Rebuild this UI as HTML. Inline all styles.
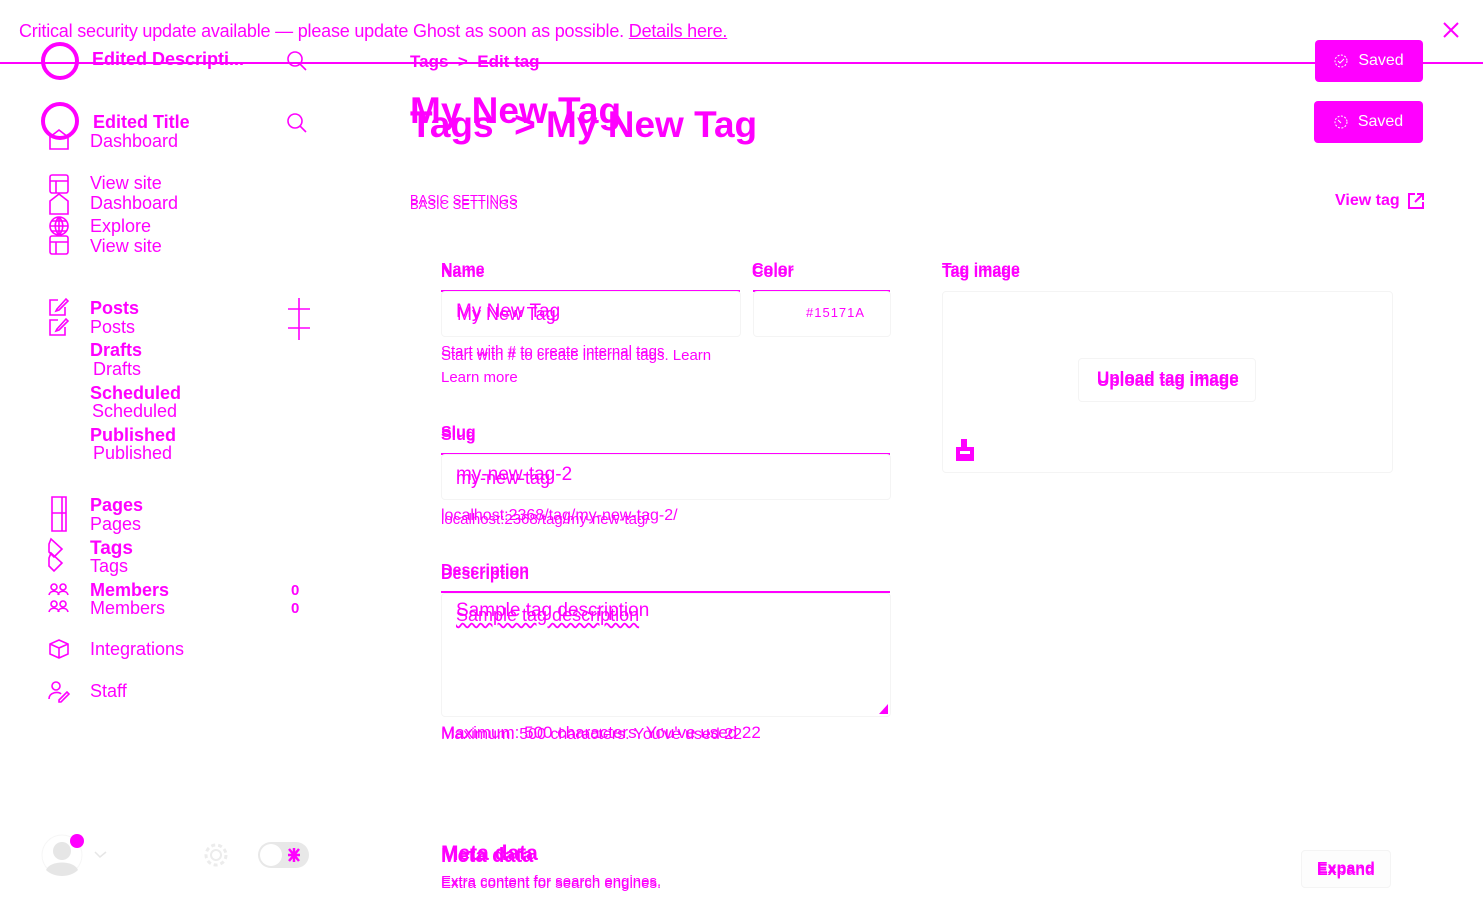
<!DOCTYPE html>
<html><head><meta charset="utf-8"><style>
*{margin:0;padding:0;box-sizing:border-box}
body{width:1483px;height:920px;background:#fff;position:relative;overflow:hidden;font-family:"Liberation Sans",sans-serif;color:#f0f}
.t{position:absolute;white-space:nowrap;line-height:1}
.b{font-weight:bold}
.ln{position:absolute;height:1.5px;background:#f0f}
.box{position:absolute;border:1px solid #f4f4f4;border-radius:4px}
svg{position:absolute;overflow:visible}
.btn{position:absolute;background:#f0f;border-radius:4px;color:#fff;font-size:16px;display:flex;align-items:center;justify-content:center;gap:10px}
</style></head><body>
<div class="t" style="left:19px;top:22px;font-size:18px;letter-spacing:-0.2px">Critical security update available — please update Ghost as soon as possible. <span style="text-decoration:underline">Details here.</span></div>
<svg style="left:1443px;top:22px" width="16" height="16"><path d="M1 1L15 15M15 1L1 15" stroke="#f0f" stroke-width="2"/></svg>
<div class="ln" style="left:0;top:62px;width:1483px"></div>

<!-- sidebar -->
<svg style="left:40px;top:41px" width="40" height="40"><circle cx="20" cy="20" r="17" fill="none" stroke="#f0f" stroke-width="4"/></svg>
<div class="t b" style="left:92px;top:50px;font-size:18px">Edited Descripti...</div>
<svg style="left:285px;top:49px" width="24" height="24"><circle cx="10" cy="10" r="7" fill="none" stroke="#f0f" stroke-width="1.6"/><path d="M15 15L21 21" stroke="#f0f" stroke-width="1.6"/></svg>
<svg style="left:40px;top:103px" width="40" height="40"><circle cx="20" cy="18" r="17" fill="none" stroke="#f0f" stroke-width="4"/><path d="M10 46V34L19 27L28 34V46Z" fill="none" stroke="#f0f" stroke-width="1.6"/></svg>
<div class="t b" style="left:93px;top:113px;font-size:18px">Edited Title</div>
<div class="t" style="left:90px;top:132px;font-size:18px">Dashboard</div>
<svg style="left:285px;top:111px" width="24" height="24"><circle cx="10" cy="10" r="7" fill="none" stroke="#f0f" stroke-width="1.6"/><path d="M15 15L21 21" stroke="#f0f" stroke-width="1.6"/></svg>

<svg style="left:49px;top:174px" width="22" height="84" fill="none" stroke="#f0f" stroke-width="1.6"><rect x="1" y="1" width="18" height="18" rx="2"/><path d="M1 7H19M7 7V19"/><path d="M1 40V27L10 20L19 27V40Z"/><circle cx="10" cy="52" r="9"/><path d="M1 52H19M10 43V61M3 47H17M3 57H17M10 43C5 48 5 56 10 61M10 43C15 48 15 56 10 61"/><rect x="1" y="62" width="18" height="18" rx="2"/><path d="M1 68H19M7 68V80"/></svg>
<div class="t" style="left:90px;top:174px;font-size:18px">View site</div>
<div class="t" style="left:90px;top:194px;font-size:18px">Dashboard</div>
<div class="t" style="left:90px;top:217px;font-size:18px">Explore</div>
<div class="t" style="left:90px;top:237px;font-size:18px">View site</div>

<svg style="left:49px;top:297px" width="22" height="42" fill="none" stroke="#f0f" stroke-width="1.6"><path d="M9 3H1V18H16V10M8 12L17 2L19 4L10 13L7 14Z"/><path d="M9 23H1V38H16V30M8 32L17 22L19 24L10 33L7 34Z"/></svg>
<div class="t b" style="left:90px;top:299px;font-size:18px">Posts</div>
<div class="t" style="left:90px;top:318px;font-size:18px">Posts</div>
<svg style="left:288px;top:298px" width="22" height="42" stroke="#f0f" stroke-width="1.6"><path d="M11 0V22M0 11H22M11 20V42M0 30H22"/></svg>
<div class="t b" style="left:90px;top:341px;font-size:18px">Drafts</div>
<div class="t" style="left:93px;top:360px;font-size:18px">Drafts</div>
<div class="t b" style="left:90px;top:384px;font-size:18px">Scheduled</div>
<div class="t" style="left:92px;top:402px;font-size:18px">Scheduled</div>
<div class="t b" style="left:90px;top:426px;font-size:18px">Published</div>
<div class="t" style="left:93px;top:444px;font-size:18px">Published</div>

<svg style="left:50px;top:496px" width="20" height="100" fill="none" stroke="#f0f" stroke-width="1.6"><path d="M2 1H16V17H2ZM2 17V35H16V17M12 1V35"/><path d="M1 43L12 53L4 61L-1 56V48ZM1 57L12 67L4 75L-1 70V62Z"/></svg>
<svg style="left:48px;top:583px" width="22" height="32" fill="none" stroke="#f0f" stroke-width="1.6"><circle cx="6" cy="4" r="3"/><circle cx="15" cy="4" r="3"/><path d="M1 12C2 7 10 7 11 12M10 12C11 7 19 7 20 12"/><circle cx="6" cy="21" r="3"/><circle cx="15" cy="21" r="3"/><path d="M1 29C2 24 10 24 11 29M10 29C11 24 19 24 20 29"/></svg>
<div class="t b" style="left:90px;top:496px;font-size:18px">Pages</div>
<div class="t" style="left:90px;top:515px;font-size:18px">Pages</div>
<div class="t b" style="left:90px;top:539px;font-size:19px">Tags</div>
<div class="t" style="left:90px;top:557px;font-size:18px">Tags</div>
<div class="t b" style="left:90px;top:581px;font-size:18px">Members</div>
<div class="t" style="left:90px;top:599px;font-size:18px">Members</div>
<div class="t b" style="left:291px;top:583px;font-size:15px">0</div>
<div class="t b" style="left:291px;top:601px;font-size:15px">0</div>
<svg style="left:49px;top:639px" width="22" height="22" fill="none" stroke="#f0f" stroke-width="1.6"><path d="M10 1L19 5V15L10 19L1 15V5ZM1 5L10 9L19 5M10 9V19"/></svg>
<div class="t" style="left:90px;top:640px;font-size:18px">Integrations</div>
<svg style="left:49px;top:681px" width="22" height="22" fill="none" stroke="#f0f" stroke-width="1.6"><circle cx="7" cy="5" r="4"/><path d="M0 18C0 11 10 10 12 13M10 19L18 11L20 13L12 21H10Z"/></svg>
<div class="t" style="left:90px;top:682px;font-size:18px">Staff</div>

<svg style="left:40px;top:834px" width="280" height="44"><circle cx="22" cy="21" r="20" fill="none" stroke="#f6f6f6"/><circle cx="22" cy="17" r="9" fill="#e6e6e6"/><path d="M6 36C10 26 34 26 38 36C30 44 14 44 6 36Z" fill="#e6e6e6"/><circle cx="37" cy="7" r="7" fill="#f0f"/><path d="M55 18L60 23L66 18" fill="none" stroke="#e6e6e6" stroke-width="1.5"/><circle cx="176" cy="21" r="5" fill="none" stroke="#ececec" stroke-width="2"/><circle cx="176" cy="21" r="10" fill="none" stroke="#ececec" stroke-width="3" stroke-dasharray="4 3"/><rect x="218" y="8" width="51" height="26" rx="13" fill="#e8e8e8"/><circle cx="231" cy="21" r="11" fill="#fff"/><path d="M249 15L259 27M259 15L249 27M248 21H260M254 14V28" stroke="#f0f" stroke-width="2.5"/></svg>

<!-- main -->
<div class="t b" style="left:410px;top:53px;font-size:17px">Tags &nbsp;&gt;&nbsp; Edit tag</div>
<div class="t b" style="left:410px;top:92px;font-size:37px">My New Tag</div>
<div class="t b" style="left:410px;top:106px;font-size:37px">Tags &nbsp;&gt; My New Tag</div>
<div class="btn" style="left:1315px;top:40px;width:108px;height:42px"><svg style="position:static" width="14" height="14"><circle cx="7" cy="7" r="6" fill="none" stroke="#fff" stroke-dasharray="2 1.5"/><path d="M4 7L6 9L10 5" fill="none" stroke="#fff"/></svg>Saved</div>
<div class="btn" style="left:1314px;top:101px;width:109px;height:42px"><svg style="position:static" width="14" height="14"><circle cx="7" cy="7" r="6" fill="none" stroke="#fff" stroke-dasharray="2 1.5"/><path d="M4 5L7 8" fill="none" stroke="#fff"/></svg>Saved</div>
<div class="t" style="left:410px;top:193px;font-size:13px">BASIC SETTINGS</div>
<div class="t" style="left:410px;top:198px;font-size:13px">BASIC SETTINGS</div>
<div class="t b" style="left:1335px;top:193px;font-size:16px">View tag</div>
<svg style="left:1408px;top:193px" width="16" height="16" fill="none" stroke="#f0f" stroke-width="2"><path d="M7 1H1V15H15V9M9 1H15V7M15 1L7 9"/></svg>

<div class="t b" style="left:441px;top:262px;font-size:16px">Name</div>
<div class="t b" style="left:441px;top:265px;font-size:16px">Name</div>
<div class="ln" style="left:441px;top:290px;width:299px"></div>
<div class="box" style="left:441px;top:291px;width:300px;height:46px"></div>
<div class="t" style="left:456px;top:302px;font-size:19px">My New Tag</div>
<div class="t" style="left:457px;top:305px;font-size:18px">My New Tag</div>
<div class="t b" style="left:752px;top:262px;font-size:16px">Color</div>
<div class="t b" style="left:752px;top:265px;font-size:16px">Color</div>
<div class="ln" style="left:753px;top:290px;width:137px"></div>
<div class="box" style="left:753px;top:291px;width:138px;height:46px"></div>
<div class="t" style="left:806px;top:306px;font-size:13px;letter-spacing:1px">#15171A</div>
<div class="t" style="left:441px;top:344px;font-size:15px">Start with # to create internal tags</div>
<div class="t" style="left:441px;top:348px;font-size:15px">Start with # to create internal tags. Learn</div>
<div class="t" style="left:441px;top:370px;font-size:15px">Learn more</div>

<div class="t b" style="left:441px;top:425px;font-size:16px">Slug</div>
<div class="t b" style="left:441px;top:428px;font-size:16px">Slug</div>
<div class="ln" style="left:441px;top:453px;width:449px"></div>
<div class="box" style="left:441px;top:454px;width:450px;height:46px"></div>
<div class="t" style="left:456px;top:465px;font-size:19px">my-new-tag-2</div>
<div class="t" style="left:456px;top:469px;font-size:18px">my-new-tag</div>
<div class="t" style="left:441px;top:508px;font-size:16px">localhost:2368/tag/my-new-tag-2/</div>
<div class="t" style="left:441px;top:512px;font-size:15px">localhost:2368/tag/my-new-tag/</div>

<div class="t b" style="left:441px;top:563px;font-size:16px">Description</div>
<div class="t b" style="left:441px;top:567px;font-size:16px">Description</div>
<div class="ln" style="left:441px;top:591px;width:449px"></div>
<div class="box" style="left:441px;top:593px;width:450px;height:124px"></div>
<div class="t" style="left:456px;top:601px;font-size:19px">Sample tag description</div>
<div class="t" style="left:456px;top:606px;font-size:18px;text-decoration:underline wavy #f0f">Sample tag description</div>
<svg style="left:879px;top:702px" width="10" height="12"><path d="M0 12L9 2V12Z" fill="#f0f"/></svg>
<div class="t" style="left:441px;top:724px;font-size:17px">Maximum: 500 characters. You've used 22</div>
<div class="t" style="left:441px;top:727px;font-size:16px">Maximum: 500 characters. You've used 22</div>

<div class="t b" style="left:942px;top:262px;font-size:16px">Tag image</div>
<div class="t b" style="left:942px;top:265px;font-size:16px">Tag image</div>
<div class="box" style="left:942px;top:291px;width:451px;height:182px"></div>
<div class="box" style="left:1078px;top:358px;width:178px;height:44px"></div>
<div class="t b" style="left:1097px;top:369px;font-size:17px">Upload tag image</div>
<div class="t b" style="left:1097px;top:372px;font-size:17px">Upload tag image</div>
<svg style="left:956px;top:439px" width="18" height="22"><rect x="5" y="0" width="6" height="8" fill="#f0f"/><rect x="0" y="8" width="18" height="14" fill="#f0f"/><rect x="4" y="12" width="10" height="3" fill="#fff"/></svg>

<div class="t b" style="left:441px;top:843px;font-size:21px">Meta data</div>
<div class="t b" style="left:441px;top:846px;font-size:20px">Meta data</div>
<div class="t" style="left:441px;top:874px;font-size:15px">Extra content for search engines.</div>
<div class="t" style="left:441px;top:876px;font-size:15px">Extra content for search engines.</div>
<div class="box" style="left:1301px;top:850px;width:90px;height:38px;background:#fdfdfd"></div>
<div class="t b" style="left:1317px;top:861px;font-size:16px">Expand</div>
<div class="t b" style="left:1317px;top:863px;font-size:16px">Expand</div>
</body></html>
